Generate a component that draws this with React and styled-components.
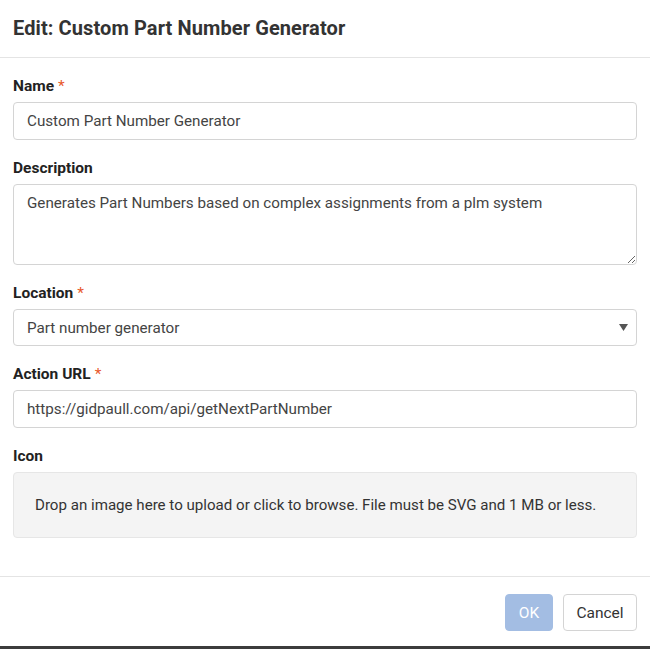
import React from "react";
import styled, { createGlobalStyle } from "styled-components";

const Global = createGlobalStyle`
  html, body { margin: 0; padding: 0; background: #fff; }
  body { font-family: Roboto, "Liberation Sans", sans-serif; }
  * { box-sizing: border-box; }
`;

const Dialog = styled.div`
  width: 650px;
  height: 649px;
  display: flex;
  flex-direction: column;
  background: #fff;
  border-bottom: 3px solid #3c3c3c;
`;

const Header = styled.div`
  height: 58px;
  display: flex;
  align-items: center;
  padding: 0 13px 2px;
  border-bottom: 1px solid #e4e4e4;
`;

const Title = styled.h1`
  margin: 0;
  font-size: 20px;
  font-weight: 700;
  color: #333;
  letter-spacing: 0.1px;
`;

const Body = styled.div`
  flex: 1;
  padding: 18px 13px 0 13px;
  display: flex;
  flex-direction: column;
  gap: 18px;
`;

const Field = styled.div`
  display: flex;
  flex-direction: column;
  gap: 6px;
`;

const Label = styled.label`
  font-size: 15.5px;
  line-height: 20px;
  font-weight: 700;
  color: #222;
`;

const Req = styled.span`
  color: #e8582c;
  margin-left: 4px;
  font-weight: 400;
`;

const controlBase = `
  width: 100%;
  border: 1px solid #d4d4d4;
  border-radius: 4px;
  background: #fff;
  font-family: Roboto, "Liberation Sans", sans-serif;
  font-size: 15.2px;
  color: #444;
  padding: 0 13px;
  outline: none;
`;

const Input = styled.input`
  ${controlBase}
  height: 38px;
`;

const TextArea = styled.textarea`
  ${controlBase}
  height: 81px;
  padding: 8px 13px;
  line-height: 20px;
  resize: vertical;
  display: block;
`;

const SelectBox = styled.div`
  ${controlBase}
  height: 37px;
  display: flex;
  align-items: center;
  justify-content: space-between;
  padding-right: 8px;
`;

const Arrow = styled.svg`
  width: 9px;
  height: 7px;
  fill: #555;
`;

const Drop = styled.div`
  height: 66px;
  border: 1px solid #e6e6e6;
  border-radius: 4px;
  background: #f4f4f4;
  display: flex;
  align-items: center;
  padding: 0 21px;
  font-size: 15.1px;
  color: #333;
`;

const Footer = styled.div`
  border-top: 1px solid #e4e4e4;
  padding: 17px 13px 15px;
  display: flex;
  justify-content: flex-end;
  gap: 10px;
`;

const Button = styled.button`
  height: 37px;
  padding: 0;
  width: ${(p) => (p.$primary ? "48px" : "74px")};
  border-radius: 4px;
  font-family: Roboto, "Liberation Sans", sans-serif;
  font-size: 15.5px;
  border: 1px solid ${(p) => (p.$primary ? "#a3bde3" : "#d4d4d4")};
  background: ${(p) => (p.$primary ? "#a3bde3" : "#fff")};
  color: ${(p) => (p.$primary ? "#fff" : "#333")};
`;

export default function App() {
  return (
    <>
      <Global />
      <Dialog>
        <Header>
          <Title>Edit: Custom Part Number Generator</Title>
        </Header>
        <Body>
          <Field>
            <Label>Name<Req>*</Req></Label>
            <Input readOnly defaultValue="Custom Part Number Generator" />
          </Field>
          <Field>
            <Label>Description</Label>
            <TextArea
              readOnly
              defaultValue="Generates Part Numbers based on complex assignments from a plm system"
            />
          </Field>
          <Field>
            <Label>Location<Req>*</Req></Label>
            <SelectBox>
              <span>Part number generator</span>
              <Arrow viewBox="0 0 9 7"><path d="M0 0h9L4.5 7z" /></Arrow>
            </SelectBox>
          </Field>
          <Field>
            <Label>Action URL<Req>*</Req></Label>
            <Input readOnly defaultValue="https://gidpaull.com/api/getNextPartNumber" />
          </Field>
          <Field>
            <Label>Icon</Label>
            <Drop>Drop an image here to upload or click to browse. File must be SVG and 1 MB or less.</Drop>
          </Field>
        </Body>
        <Footer>
          <Button $primary>OK</Button>
          <Button>Cancel</Button>
        </Footer>
      </Dialog>
    </>
  );
}
